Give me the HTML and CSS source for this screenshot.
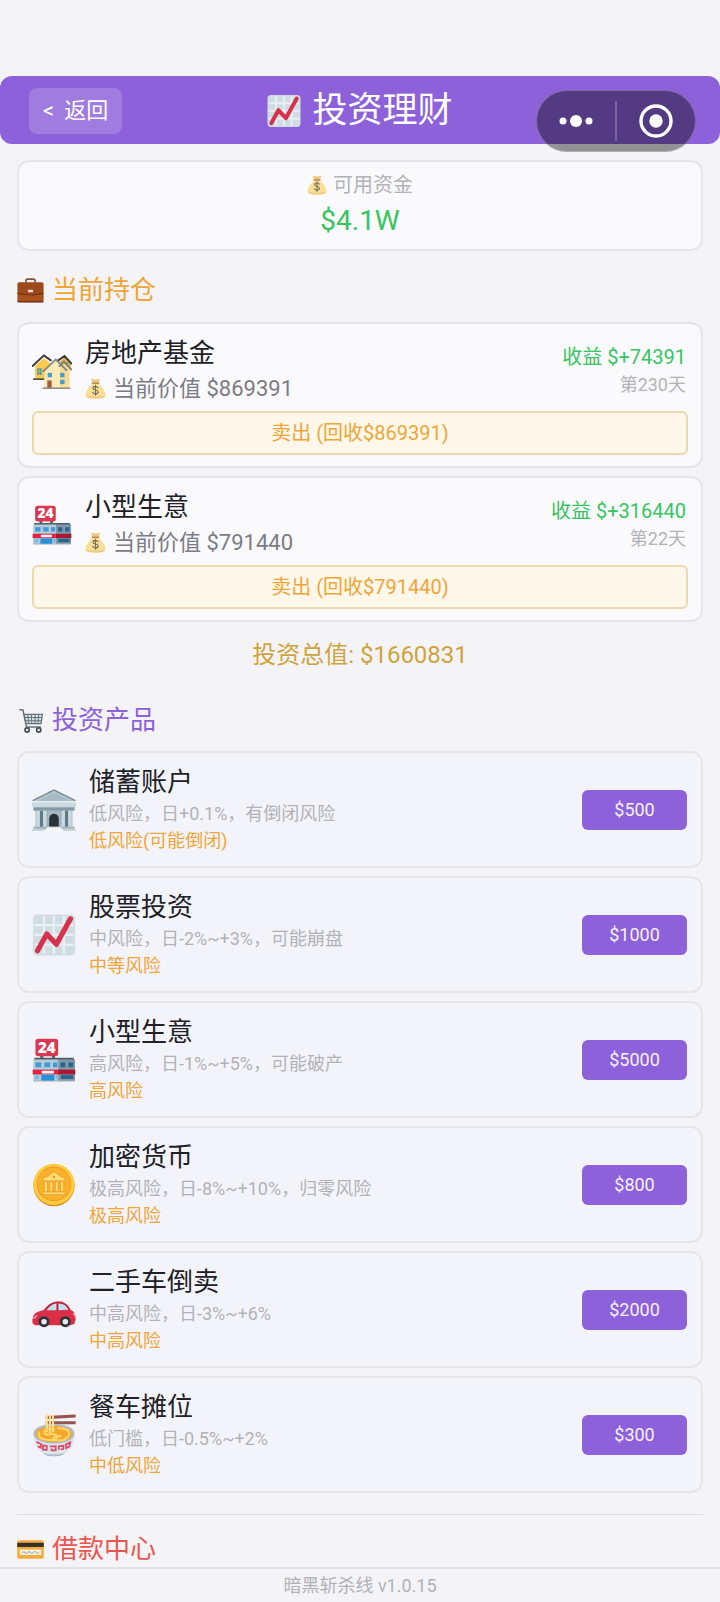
FILE: index.html
```html
<!DOCTYPE html>
<html lang="zh-CN">
<head>
<meta charset="utf-8">
<meta name="viewport" content="width=device-width, initial-scale=1">
<title>投资理财</title>
<link rel="stylesheet" href="styles.css">
</head>
<body>
<svg class="sprite" aria-hidden="true">
  <symbol id="chart" viewBox="0 0 128 128">
    <rect x="3" y="5" width="122" height="118" rx="12" fill="#cfdce2"/>
    <g fill="#e9f0f3"><rect x="3" y="32" width="122" height="7"/><rect x="3" y="60" width="122" height="7"/><rect x="3" y="89" width="122" height="7"/><rect x="31" y="5" width="7" height="118"/><rect x="60" y="5" width="7" height="118"/><rect x="89" y="5" width="7" height="118"/></g>
    <rect x="5" y="7" width="118" height="114" rx="10" fill="none" stroke="#d3dfe4" stroke-width="5"/>
    <path d="M16 110 43 61 71 91 112 17" fill="none" stroke="#d6314d" stroke-width="15" stroke-linecap="round" stroke-linejoin="round"/>
  </symbol>
  <symbol id="bag" viewBox="0 0 128 128">
    <path d="M36 5q28 9 56 0L82 30H46z" fill="#efc677"/>
    <path d="M46 35h36c13 12 43 42 43 68 0 18-21 22-61 22S3 121 3 103c0-26 30-56 43-68z" fill="#fbdf96"/>
    <path d="M5 105c2 15 22 20 59 20s57-5 59-20c-13 10-105 10-118 0z" fill="#f0ca80"/>
    <rect x="40" y="27" width="48" height="10" rx="5" fill="#b78a55"/>
    <path d="M79 59c-4-6-9-8-15-8-9 0-15 4-15 11 0 15 31 7 31 23 0 8-7 12-16 12-8 0-14-3-17-10M64 43v62" fill="none" stroke="#76715e" stroke-width="7" stroke-linecap="round"/>
  </symbol>
  <symbol id="briefcase" viewBox="0 0 128 128">
    <path d="M42 27v-9q0-8 8-8h28q8 0 8 8v9" fill="none" stroke="#7d5546" stroke-width="8"/>
    <rect x="2" y="25" width="124" height="96" rx="9" fill="#9c4a1c"/>
    <rect x="5" y="77" width="118" height="42" rx="7" fill="#a9501d"/>
    <path d="M2 75q62 14 124 0v5q-62 14-124 0z" fill="#6f3114"/>
    <path d="M5 117h118" stroke="#713519" stroke-width="6" stroke-linecap="round"/>
    <rect x="52" y="60" width="24" height="12" rx="3" fill="#e8dcd6"/>
  </symbol>
  <symbol id="houses" viewBox="0 0 128 128">
    <path d="M10 48 38 22l24 20v50H10z" fill="#fdc94b"/>
    <path d="M82 40 104 20l20 20v22H86z" fill="#e9b541"/>
    <path d="M2 48 38 14l22 16M84 30l20-14 22 24" fill="none" stroke="#38383b" stroke-width="6" stroke-linecap="round"/>
    <path d="M3 90h36" stroke="#4b4947" stroke-width="5"/>
    <path d="M17 55h14v22H17zM104 36h11v13h-11z" fill="#4c9bb5"/><path d="M24 55v22M17 65h14" stroke="#e7ba50" stroke-width="2"/>
    <path d="M40 62 78 30l20 18 20 14v56H40z" fill="#fcebb6"/>
    <path d="M90 52l14-12 16 18v60H90z" fill="#f8dc95"/>
    <path d="M36 65 76 27l34 34M88 48l14-14 24 25" fill="none" stroke="#80858a" stroke-width="6" stroke-linecap="round"/>
    <g fill="#439fca"><rect x="50" y="70" width="14" height="14"/><rect x="90" y="70" width="14" height="14"/><rect x="90" y="92" width="14" height="14"/></g>
    <rect x="49" y="94" width="14" height="25" fill="#a75a45"/><path d="M34 119h88" stroke="#8f8c87" stroke-width="5"/>
  </symbol>
  <symbol id="store" viewBox="0 0 128 128">
    <path d="M24 50h9v14h-9zM58 50h9v14h-9z" fill="#58636a"/>
    <rect x="10" y="2" width="66" height="51" rx="8" fill="#db3750"/>
    <text x="43" y="43" text-anchor="middle" class="store-sign">24</text>
    <path d="M8 58h68v67H4V64z" fill="#b6cbd7"/><path d="M76 58h44l5 6v61H76z" fill="#8098a8"/>
    <path d="M7 60h70M77 60h44" stroke="#515e68" stroke-width="5"/>
    <g fill="#3d9cdb"><rect x="10" y="71" width="17" height="14"/><rect x="36" y="71" width="17" height="14"/><rect x="61" y="71" width="13" height="14"/></g>
    <g fill="#28658f"><rect x="83" y="71" width="14" height="14"/><rect x="106" y="71" width="14" height="14"/></g>
    <path d="M2 92h74v14H2z" fill="#e5213f"/><path d="M76 92h50v14H76z" fill="#a81931"/>
    <rect x="28" y="95" width="36" height="8" rx="3" fill="#fff"/>
    <path d="M27 107h38v18H27z" fill="#288fda"/><path d="M7 108h14v12H7zM69 108h7v12h-7z" fill="#81bce0"/><path d="M84 108h36v11H84z" fill="#28658f"/>
    <path d="M3 125h122" stroke="#a2b2bb" stroke-width="3"/>
  </symbol>
  <symbol id="cart" viewBox="0 0 128 128">
    <path d="M13 13h15l17 82h66" fill="none" stroke="#66737a" stroke-width="7" stroke-linecap="round" stroke-linejoin="round"/>
    <path d="M34 35h86l-6 44H43z" fill="#dce5e8" stroke="#66737a" stroke-width="6"/>
    <path d="M36 50h82M40 65h76M51 35l5 44M68 35l2 44M86 35l-1 44M103 35l-4 44" stroke="#66737a" stroke-width="5"/>
    <g fill="#e9edef" stroke="#454d52" stroke-width="8"><circle cx="48" cy="109" r="10"/><circle cx="103" cy="109" r="10"/></g>
  </symbol>
  <symbol id="bank" viewBox="0 0 128 128">
    <path d="M1 38 64 5l63 33z" fill="#b7c9d1"/><path d="M14 38 64 14l50 24z" fill="#a9bcc5"/>
    <path d="M2 37 64 6l62 31" fill="none" stroke="#788b94" stroke-width="4"/>
    <rect y="38" width="128" height="18" fill="#cddbe1"/><path d="M0 40h128" stroke="#e4edf0" stroke-width="4"/>
    <rect x="4" y="56" width="120" height="10" fill="#819aa6"/><rect x="11" y="66" width="106" height="48" fill="#607985"/>
    <path d="M44 66h40v48H44z" fill="#a5b9c2"/>
    <path d="M50 114V89a14 14 0 0 1 28 0v25z" fill="#2c3438"/>
    <g fill="#c9d9e0"><rect x="12" y="66" width="11" height="48"/><rect x="32" y="66" width="11" height="48"/><rect x="85" y="66" width="11" height="48"/><rect x="105" y="66" width="11" height="48"/></g>
    <path d="M4 112h120v10H4z" fill="#a8bac3"/><path d="M0 119h128v6H0z" fill="#c8d5db"/><path d="M45 114h38l10 11H35z" fill="#f6f8f8"/>
  </symbol>
  <symbol id="coin" viewBox="0 0 128 128">
    <circle cx="64" cy="66" r="60" fill="#d68b1c"/><circle cx="64" cy="62" r="60" fill="#ffcb3e"/>
    <circle cx="64" cy="61" r="49" fill="#fab02c" stroke="#eaa023" stroke-width="3"/>
    <g fill="#ffdc73" stroke="#e39b22" stroke-width="2"><path d="M32 44q14-3 32-19 18 16 32 19v8H32zM36 53h9v31h-9zM52 53h8v31h-8zM68 53h8v31h-8zM83 53h9v31h-9zM32 84h64v8H32z"/></g>
    <circle cx="64" cy="41" r="4" fill="#e5a02a"/>
  </symbol>
  <symbol id="car" viewBox="0 0 128 128">
    <path d="M1 93q2-18 16-24l17-5q18-24 38-25 28-2 41 25 13 4 14 27l-4 14-12 3H10l-8-4z" fill="#dd2e49"/>
    <path d="M42 65q13-19 29-20v20zM77 45q20-1 29 18l-29 2z" fill="#bde1f1"/>
    <path d="M37 66q17-23 34-24M76 42q22 0 34 22M74 42v25" fill="none" stroke="#ac253a" stroke-width="3"/>
    <path d="M3 87q9 1 10-8M119 76h5l2 9" fill="none" stroke="#ffb4af" stroke-width="3"/>
    <g fill="#e3edf1" stroke="#303438" stroke-width="8"><circle cx="35" cy="98" r="12"/><circle cx="97" cy="98" r="12"/></g>
  </symbol>
  <symbol id="noodles" viewBox="0 0 128 128">
    <path d="M40 9 127 4v9L40 18zM40 24h87v9H40z" fill="#96564f"/>
    <path d="M4 61c1 31 14 50 32 58q28 12 56 0c18-8 31-27 32-58z" fill="#dfe4ea"/>
    <path d="M32 116q32 10 64 0-8 7-14 8-18 4-36 0-6-1-14-8z" fill="#a9bdc9"/>
    <ellipse cx="64" cy="60" rx="60" ry="29" fill="#b3bdc2"/><ellipse cx="64" cy="61" rx="53" ry="24" fill="#f4a72b"/>
    <g fill="none" stroke="#ffd66b" stroke-width="6" stroke-linecap="round"><path d="M43 7v47M52 7v50M61 7v47" stroke="#ffdf91"/><path d="M21 57q-4 18 20 21 35 4 31-10-4-10-24-5-13 1-12-8 2-12 28-8M76 44q33 0 32 17-5 20-31 19-15 0-14-7 1-8 20-5"/></g>
    <path d="M13 84l13 6v11l-9-4M32 94l11 2v11H32zM52 97h17v12H57v-6M78 107V97l13-2v10l-8 1M98 92l13-7-2 12-10 5z" fill="none" stroke="#df4969" stroke-width="5"/>
  </symbol>
  <symbol id="card" viewBox="0 0 128 128">
    <rect x="1" y="20" width="126" height="88" rx="9" fill="#f4ac3a"/><path d="M1 32h126v20H1z" fill="#3a302b"/>
    <rect x="13" y="64" width="102" height="26" rx="2" fill="#f8f1df"/>
    <path d="M25 82q7-14 13-4t13 0 13 0 13 0 13 0 15 0" fill="none" stroke="#7a8b98" stroke-width="4"/>
  </symbol>
</svg>

<header class="topbar">
  <button class="back" type="button"><span>&lt;</span><span>返回</span></button>
  <h1 class="page-title"><svg class="icon-title" aria-hidden="true"><use href="#chart"/></svg>投资理财</h1>
  <div class="capsule">
    <button class="capsule-btn" type="button" aria-label="更多">
      <svg class="icon-dots" viewBox="0 0 36 14" aria-hidden="true"><g fill="#fff"><circle cx="5" cy="7" r="3.5"/><circle cx="18" cy="7" r="6"/><circle cx="31" cy="7" r="3.5"/></g></svg>
    </button>
    <button class="capsule-btn" type="button" aria-label="关闭">
      <svg class="icon-target" viewBox="0 0 34 34" aria-hidden="true"><circle cx="17" cy="17" r="15" fill="none" stroke="#fff" stroke-width="3.4"/><circle cx="17" cy="17" r="6.7" fill="#fff"/></svg>
    </button>
  </div>
</header>

<main class="content">
  <section class="panel funds">
    <p class="funds-label"><svg class="icon-small" aria-hidden="true"><use href="#bag"/></svg>可用资金</p>
    <p class="funds-value">$4.1W</p>
  </section>

  <section>
    <h2 class="section-title holdings-title"><svg class="icon-section" aria-hidden="true"><use href="#briefcase"/></svg>当前持仓</h2>
    <div class="list">
      <article class="panel holding">
        <div class="holding-row">
          <svg class="icon-holding" aria-hidden="true"><use href="#houses"/></svg>
          <div class="info">
            <h3 class="name">房地产基金</h3>
            <p class="worth"><svg class="icon-worth" aria-hidden="true"><use href="#bag"/></svg>当前价值 $869391</p>
          </div>
          <div class="result"><p class="profit">收益 $+74391</p><p class="days">第230天</p></div>
        </div>
        <button class="sell" type="button">卖出 (回收$869391)</button>
      </article>
      <article class="panel holding">
        <div class="holding-row">
          <svg class="icon-holding" aria-hidden="true"><use href="#store"/></svg>
          <div class="info">
            <h3 class="name">小型生意</h3>
            <p class="worth"><svg class="icon-worth" aria-hidden="true"><use href="#bag"/></svg>当前价值 $791440</p>
          </div>
          <div class="result"><p class="profit">收益 $+316440</p><p class="days">第22天</p></div>
        </div>
        <button class="sell" type="button">卖出 (回收$791440)</button>
      </article>
    </div>
    <p class="total">投资总值: $1660831</p>
  </section>

  <section>
    <h2 class="section-title products-title"><svg class="icon-section" aria-hidden="true"><use href="#cart"/></svg>投资产品</h2>
    <div class="list">
      <article class="panel product">
        <svg class="icon-product" aria-hidden="true"><use href="#bank"/></svg>
        <div class="info"><h3 class="name">储蓄账户</h3><p class="desc">低风险，日+0.1%，有倒闭风险</p><p class="risk">低风险(可能倒闭)</p></div>
        <button class="buy" type="button">$500</button>
      </article>
      <article class="panel product">
        <svg class="icon-product" aria-hidden="true"><use href="#chart"/></svg>
        <div class="info"><h3 class="name">股票投资</h3><p class="desc">中风险，日-2%~+3%，可能崩盘</p><p class="risk">中等风险</p></div>
        <button class="buy" type="button">$1000</button>
      </article>
      <article class="panel product">
        <svg class="icon-product" aria-hidden="true"><use href="#store"/></svg>
        <div class="info"><h3 class="name">小型生意</h3><p class="desc">高风险，日-1%~+5%，可能破产</p><p class="risk">高风险</p></div>
        <button class="buy" type="button">$5000</button>
      </article>
      <article class="panel product">
        <svg class="icon-product" aria-hidden="true"><use href="#coin"/></svg>
        <div class="info"><h3 class="name">加密货币</h3><p class="desc">极高风险，日-8%~+10%，归零风险</p><p class="risk">极高风险</p></div>
        <button class="buy" type="button">$800</button>
      </article>
      <article class="panel product">
        <svg class="icon-product" aria-hidden="true"><use href="#car"/></svg>
        <div class="info"><h3 class="name">二手车倒卖</h3><p class="desc">中高风险，日-3%~+6%</p><p class="risk">中高风险</p></div>
        <button class="buy" type="button">$2000</button>
      </article>
      <article class="panel product">
        <svg class="icon-product" aria-hidden="true"><use href="#noodles"/></svg>
        <div class="info"><h3 class="name">餐车摊位</h3><p class="desc">低门槛，日-0.5%~+2%</p><p class="risk">中低风险</p></div>
        <button class="buy" type="button">$300</button>
      </article>
    </div>
  </section>

  <section class="loans">
    <h2 class="section-title loans-title"><svg class="icon-section" aria-hidden="true"><use href="#card"/></svg>借款中心</h2>
  </section>
</main>

<footer class="footer">暗黑斩杀线 v1.0.15</footer>
</body>
</html>
```
FILE: styles.css
```css
* { box-sizing: border-box; }

body {
  margin: 0;
  padding-top: 76px;
  background: #f4f4f7;
  color: #202026;
  font-family: Roboto, "Noto Sans CJK SC", sans-serif;
}

h1, h2, h3, p { margin: 0; font-weight: 400; }
button { margin: 0; padding: 0; border: 0; font: inherit; cursor: pointer; }
svg { display: block; flex: none; }

.sprite { position: absolute; width: 0; height: 0; }
.store-sign { fill: #fff; font-family: "Open Sans", sans-serif; font-size: 44px; font-weight: 800; }

.topbar {
  position: relative;
  display: grid;
  grid-template-columns: 1fr auto 1fr;
  align-items: center;
  padding: 12px 29px 10px;
  border-radius: 12px;
  background: #8c61da;
  color: #fff;
}
.back {
  display: flex;
  gap: 10px;
  justify-self: start;
  padding: 0 14px;
  border-radius: 8px;
  background: #a07be0;
  color: #fff;
  font-size: 22px;
  line-height: 46px;
}
.page-title {
  display: flex;
  align-items: center;
  gap: 11px;
  font-size: 35px;
  line-height: 46px;
}
.icon-title { width: 34px; height: 34px; }

/* Floating system capsule that hangs over the lower edge of the bar */
.capsule {
  position: absolute;
  top: 14px;
  right: 24px;
  display: flex;
  align-items: center;
  width: 160px;
  height: 62px;
  border: 1px solid rgba(255, 255, 255, 0.25);
  border-radius: 31px;
  background: rgba(0, 0, 0, 0.4);
}
.capsule-btn {
  display: flex;
  flex: 1;
  align-items: center;
  justify-content: center;
  height: 40px;
  background: transparent;
}
.capsule-btn + .capsule-btn { border-left: 2px solid rgba(255, 255, 255, 0.2); }
.icon-dots { width: 36px; height: 14px; }
.icon-target { width: 34px; height: 34px; }

.content { padding: 16px 17px 0; }

.panel {
  border: 2px solid #e5e5ea;
  border-radius: 12px;
  background: #fafafc;
}

.funds {
  display: flex;
  flex-direction: column;
  align-items: center;
  gap: 3px;
  padding: 9px;
}
.funds-label {
  display: flex;
  align-items: center;
  gap: 6px;
  color: #b2b2b8;
  font-size: 20px;
  line-height: 28px;
}
.funds-value { color: #36c55f; font-size: 28px; line-height: 38px; }
.icon-small { width: 20px; height: 20px; }

.section-title {
  display: flex;
  align-items: center;
  gap: 8px;
  font-size: 26px;
  line-height: 36px;
}
.icon-section { width: 27px; height: 27px; }
.holdings-title { margin: 21px 0 14px; color: #efa537; }
.products-title { margin: 29px 0 13px; color: #8c61da; }
.loans-title { color: #ec5450; }

.list { display: flex; flex-direction: column; gap: 8px; }

.info { flex: 1; min-width: 0; }
.name { font-size: 26px; line-height: 35px; }

.holding { padding: 12px 13px 11px; }
.holding-row { display: flex; align-items: center; gap: 13px; }
.icon-holding { width: 40px; height: 40px; }
.worth {
  display: flex;
  align-items: center;
  gap: 7px;
  color: #7c7c85;
  font-size: 22px;
  line-height: 35px;
}
.icon-worth { width: 21px; height: 21px; }
.result { padding-right: 2px; text-align: right; }
.profit { color: #36c55f; font-size: 20px; line-height: 28px; }
.days { color: #b2b2b8; font-size: 18px; line-height: 28px; }
.sell {
  display: block;
  width: 100%;
  margin-top: 5px;
  border: 2px solid #edd8af;
  border-radius: 6px;
  background: #fff7ea;
  color: #efa537;
  font-size: 20px;
  line-height: 40px;
}

.total {
  margin-top: 15px;
  color: #cfa33d;
  font-size: 24px;
  line-height: 36px;
  text-align: center;
}

.product {
  display: flex;
  align-items: center;
  gap: 13px;
  padding: 12px 14px 12px 13px;
  background: #f3f4fa;
}
.icon-product { width: 44px; height: 44px; }
.desc { color: #b2b2b8; font-size: 18px; line-height: 27px; }
.risk { color: #efa537; font-size: 18px; line-height: 27px; }
.buy {
  width: 105px;
  border-radius: 6px;
  background: #8c61da;
  color: #f6f0ff;
  font-size: 18px;
  line-height: 40px;
}

.loans { margin-top: 21px; padding-top: 16px; border-top: 1px solid #dcdce1; }

.footer {
  border-top: 2px solid #e3e3e7;
  color: #b2b2b8;
  font-size: 18px;
  line-height: 33px;
  text-align: center;
}
```
